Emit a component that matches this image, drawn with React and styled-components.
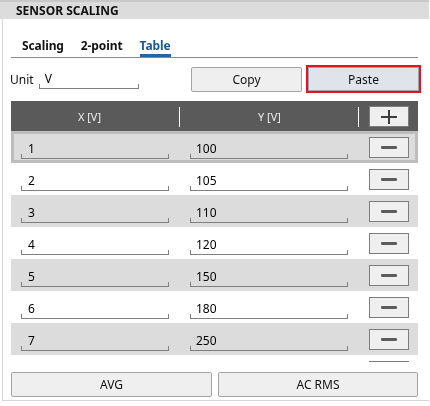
import React from "react";
import styled, { createGlobalStyle } from "styled-components";

const Global = createGlobalStyle`
  html, body { margin: 0; padding: 0; background: #ffffff; }
  body {
    font-family: "Noto Sans", "Liberation Sans", sans-serif;
    font-size: 12px;
    color: #000;
    width: 430px;
    height: 406px;
    overflow: hidden;
  }
  * { box-sizing: border-box; }
`;

const Header = styled.div`
  width: 429px;
  height: 19px;
  background: #dcdcdc;
  border-top: 2px solid #c8c8c8;
  padding-left: 16px;
  font-weight: 700;
  font-size: 12px;
  line-height: 17px;
  color: #111;
`;

const Body = styled.div`
  margin-left: 2px;
  width: 427px;
  border-left: 1px solid #d6d6d6;
  border-bottom: 1px solid #d6d6d6;
  padding: 19px 11px 3px 8px;
`;

const TabStrip = styled.div`
  display: flex;
  gap: 17px;
  padding-left: 11px;
  border-bottom: 1px solid #8a8a8a;
`;

const Tab = styled.div`
  font-weight: 700;
  line-height: 16px;
  letter-spacing: -0.1px;
  border-bottom: 3px solid ${(p) => (p.$active ? "#1d67b0" : "transparent")};
  color: ${(p) => (p.$active ? "#1a5a9a" : "#111")};
  cursor: pointer;
`;

const UnitRow = styled.div`
  display: flex;
  align-items: center;
  margin-top: 9px;
  height: 25px;
`;

const Label = styled.span`
  margin-left: -1px;
  line-height: 16px;
  color: #111;
`;

const Field = styled.div`
  position: relative;
  height: 19px;
  width: ${(p) => p.$w}px;
  border-bottom: 1px solid #7f7f7f;
  &::before, &::after {
    content: "";
    position: absolute;
    bottom: 0;
    width: 1px;
    height: 4px;
    background: #7f7f7f;
  }
  &::before { left: 0; }
  &::after { right: 0; }
`;

const FieldInput = styled.input`
  display: block;
  width: 100%;
  height: 18px;
  border: none;
  background: transparent;
  padding: 0 0 0 ${(p) => p.$pad || 6}px;
  font-family: inherit;
  font-size: 12px;
  line-height: 18px;
  color: #000;
  outline: none;
`;

const UnitField = styled(Field)`
  margin-left: 5px;
  align-self: flex-end;
  margin-bottom: 3px;
`;

const ButtonGroup = styled.div`
  display: flex;
  gap: 6px;
  margin-left: auto;
  margin-right: -1px;
`;

const Button = styled.button`
  width: ${(p) => p.$w}px;
  height: 25px;
  border: 1px solid #a3a3a3;
  border-radius: 2px;
  background: #efefef;
  font-family: inherit;
  font-size: 12px;
  color: #111;
  padding: 0;
  cursor: pointer;
`;

const PasteButton = styled(Button)`
  height: 24px;
  border-radius: 0;
  background: #dfe4ea;
  border-color: #9aa5b1;
  outline: 2px solid #e3141f;
  outline-offset: 0;
`;

const Table = styled.div`
  margin-top: 9px;
  width: 407px;
`;

const Columns = `
  display: grid;
  grid-template-columns: 169px 179px 59px;
`;

const HeadRow = styled.div`
  ${Columns}
  height: 30px;
  background: #5a5a5a;
  align-items: center;
`;

const HeadCell = styled.div`
  position: relative;
  height: 100%;
  display: flex;
  align-items: center;
  justify-content: center;
  padding-right: ${(p) => p.$shift || 0}px;
  color: #ececec;
  font-size: 11px;
  &::after {
    content: "";
    position: absolute;
    right: 0;
    top: 6px;
    width: 1px;
    height: 20px;
    background: #ffffff;
  }
`;

const ActionCell = styled.div`
  padding-left: 10px;
  padding-top: ${(p) => p.$top}px;
  height: 100%;
`;

const IconButton = styled.button`
  display: flex;
  align-items: center;
  justify-content: center;
  width: 40px;
  height: 21px;
  padding: 0;
  border: 1px solid #7d7d7d;
  background: #efefef;
  cursor: pointer;
`;

const Scroller = styled.div`
  height: 231px;
  overflow-y: auto;
  scrollbar-width: none;
  &::-webkit-scrollbar { display: none; }
`;

const Row = styled.div`
  ${Columns}
  height: 32px;
  background: ${(p) => (p.$shade ? "#dcdcdc" : "#ffffff")};
  box-shadow: ${(p) => (p.$selected ? "inset 0 0 0 3px #bdbdbd" : "none")};
`;

const Cell = styled.div`
  padding-left: 10px;
  padding-top: 9px;
`;

const Footer = styled.div`
  display: flex;
  gap: 6px;
  margin-top: 10px;
`;

const MinusIcon = () => (
  <svg width="16" height="3" viewBox="0 0 16 3">
    <rect x="0" y="0" width="16" height="3" rx="1.2" fill="#5c5c5c" />
  </svg>
);

const PlusIcon = () => (
  <svg width="16" height="14" viewBox="0 0 16 14">
    <rect x="0" y="6" width="16" height="2" fill="#3c3c3c" />
    <rect x="7" y="0" width="2" height="14" fill="#3c3c3c" />
  </svg>
);

const points = [
  ["1", "100"],
  ["2", "105"],
  ["3", "110"],
  ["4", "120"],
  ["5", "150"],
  ["6", "180"],
  ["7", "250"],
  ["8", "300"],
];

export default function App() {
  return (
    <>
      <Global />
      <Header>SENSOR SCALING</Header>
      <Body>
        <TabStrip>
          <Tab>Scaling</Tab>
          <Tab>2-point</Tab>
          <Tab $active>Table</Tab>
        </TabStrip>

        <UnitRow>
          <Label>Unit</Label>
          <UnitField $w={100}>
            <FieldInput defaultValue="V" $pad={6} />
          </UnitField>
          <ButtonGroup>
            <Button $w={111}>Copy</Button>
            <PasteButton $w={111}>Paste</PasteButton>
          </ButtonGroup>
        </UnitRow>

        <Table>
          <HeadRow>
            <HeadCell $shift={12}>X [V]</HeadCell>
            <HeadCell>Y [V]</HeadCell>
            <ActionCell $top={5}>
              <IconButton aria-label="Add point">
                <PlusIcon />
              </IconButton>
            </ActionCell>
          </HeadRow>
          <Scroller>
            {points.map(([x, y], i) => (
              <Row key={x} $shade={i % 2 === 0} $selected={i === 0}>
                <Cell>
                  <Field $w={148}>
                    <FieldInput defaultValue={x} $pad={7} />
                  </Field>
                </Cell>
                <Cell>
                  <Field $w={158}>
                    <FieldInput defaultValue={y} $pad={6} />
                  </Field>
                </Cell>
                <ActionCell $top={6}>
                  <IconButton aria-label="Remove point">
                    <MinusIcon />
                  </IconButton>
                </ActionCell>
              </Row>
            ))}
          </Scroller>
        </Table>

        <Footer>
          <Button $w={201}>AVG</Button>
          <Button $w={200}>AC RMS</Button>
        </Footer>
      </Body>
    </>
  );
}
